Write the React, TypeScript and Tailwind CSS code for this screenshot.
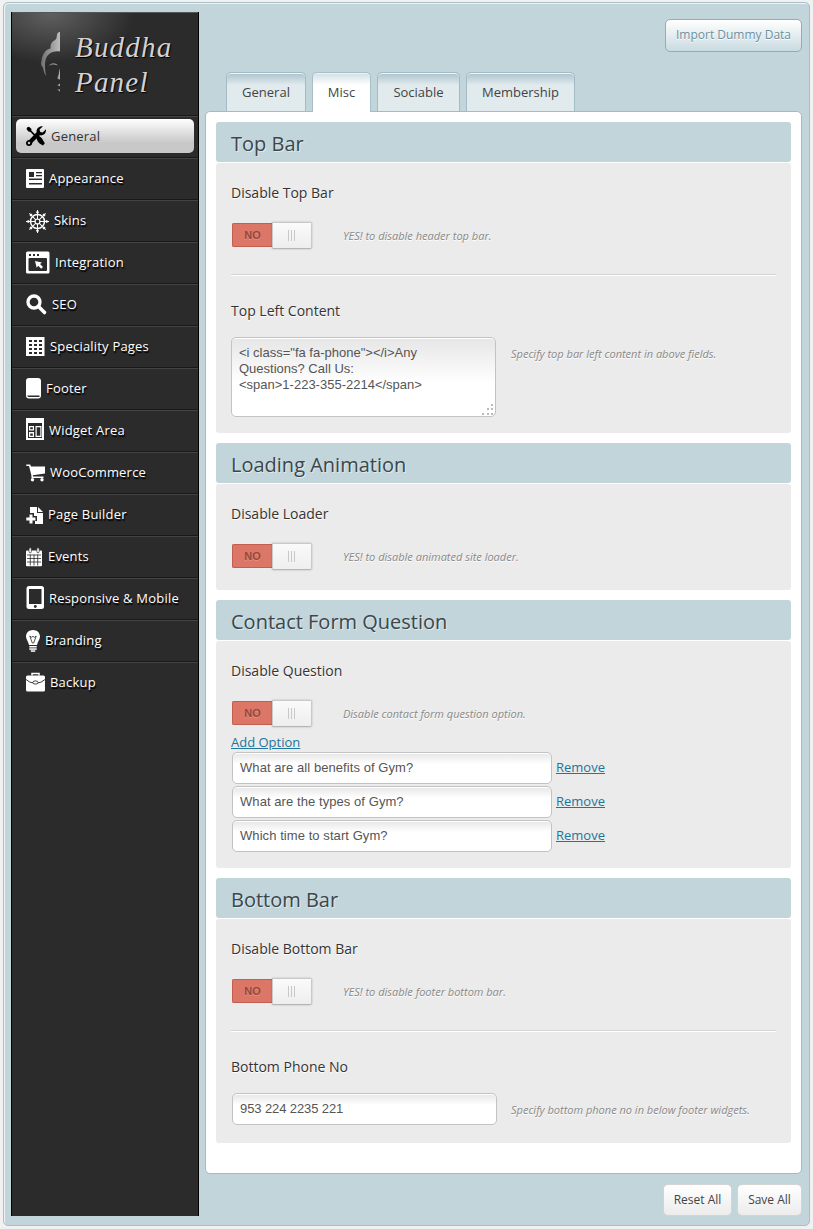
import React from "react";

type IconProps = { w: number; children: React.ReactNode };

const Glyph = ({ w, children }: IconProps) => (
  <svg width={w} height={42} viewBox={`0 0 ${w} 42`} className="block shrink-0" fill="#fff">
    {children}
  </svg>
);

const D = "#2b2b2b";

const spokes = [0, 45, 90, 135, 180, 225, 270, 315];

const navItems: { label: string; icon: React.ReactNode }[] = [
  {
    label: "Appearance",
    icon: (
      <Glyph w={23}>
        <rect x="0" y="11" width="18" height="19" rx="1" />
        <g fill={D}>
          <rect x="3" y="14" width="5" height="5" />
          <rect x="10" y="14" width="6" height="1.3" />
          <rect x="10" y="17" width="6" height="1.3" />
          <rect x="3" y="20.5" width="13" height="1.5" />
          <rect x="3" y="25" width="13" height="1.5" />
        </g>
      </Glyph>
    ),
  },
  {
    label: "Skins",
    icon: (
      <Glyph w={28}>
        <g stroke="#fff" fill="none" transform="translate(11.5 21.5)">
          <circle r="7" strokeWidth="1.5" />
          <circle r="2.5" strokeWidth="1.2" />
          {spokes.map((a) => (
            <g key={a} transform={`rotate(${a})`}>
              <line x1="2" x2="11.5" y1="0" y2="0" strokeWidth="1" />
              <line x1="9.2" x2="9.2" y1="-1.3" y2="1.3" strokeWidth="1.6" />
            </g>
          ))}
        </g>
      </Glyph>
    ),
  },
  {
    label: "Integration",
    icon: (
      <Glyph w={29}>
        <rect x="0" y="9.5" width="23.5" height="22" rx="1.5" />
        <g fill={D}>
          <rect x="2.5" y="16" width="18.5" height="13" rx="1" />
          <rect x="3" y="12" width="2" height="2" />
          <rect x="7" y="12" width="2" height="2" />
          <rect x="11" y="12" width="2" height="2" />
        </g>
        <path d="M9 19l7 1.5-2 1.5 3 3-1.8 1.8-3-3-1.5 2z" />
      </Glyph>
    ),
  },
  {
    label: "SEO",
    icon: (
      <Glyph w={26}>
        <circle cx="8" cy="18" r="6" fill="none" stroke="#fff" strokeWidth="3.3" />
        <path d="M12.5 22.5L18.5 28.5" stroke="#fff" strokeWidth="3.6" strokeLinecap="round" />
      </Glyph>
    ),
  },
  {
    label: "Speciality Pages",
    icon: (
      <Glyph w={24}>
        <rect x="0" y="11" width="18.5" height="19" />
        {[14, 18, 22, 26].map((y) =>
          [3, 8, 13].map((x) => <rect key={`${x}-${y}`} x={x} y={y} width="3" height="2" fill={D} />),
        )}
      </Glyph>
    ),
  },
  {
    label: "Footer",
    icon: (
      <Glyph w={20}>
        <rect x="0" y="10" width="15" height="20.5" rx="3" />
        <path d="M1.2 27.5H13.5V29H3Q1.6 29 1.2 27.5z" fill={D} />
      </Glyph>
    ),
  },
  {
    label: "Widget Area",
    icon: (
      <Glyph w={23}>
        <rect x="0" y="8" width="18" height="22" />
        <g fill={D}>
          <rect x="2" y="10" width="14" height="3" opacity="0" />
          <path d="M2 13h14v15H2z" />
        </g>
        <path d="M3 16h5v4.500H3zM3 22h5v5H3zM9.500 16h6v11h-6z" />
        <path d="M4.200 17.200h2.600v2H4.200zM4.200 23.500h2.600v2.200H4.200zM10.700 17.200h3.600v8.600h-3.600z" fill={D} />
      </Glyph>
    ),
  },
  {
    label: "WooCommerce",
    icon: (
      <Glyph w={24}>
        <path d="M0.300 12.500H4.200L5 14.500H19V21.500L6.800 23.300 7 24.500H17.500V26H5.500L5.300 23 3 14H0.300z" />
        <circle cx="6.500" cy="27.700" r="1.700" />
        <circle cx="16" cy="27.700" r="1.700" />
      </Glyph>
    ),
  },
  {
    label: "Page Builder",
    icon: (
      <Glyph w={22}>
        <path d="M4 13h7v6h6v11H9v-3h2v-5H8v-3H4z" />
        <path d="M12 13l5 5h-5z" />
        <path d="M3.5 20.5h3v3h3v3h-3v3h-3v-3H0.3v-3h3.2z" />
      </Glyph>
    ),
  },
  {
    label: "Events",
    icon: (
      <Glyph w={22}>
        <rect x="0" y="14.5" width="16" height="15.8" rx="1" />
        <g fill="#fff" stroke={D} strokeWidth="0.7">
          <rect x="3" y="11.8" width="2.4" height="5" rx="1.2" />
          <rect x="10.8" y="11.8" width="2.4" height="5" rx="1.2" />
        </g>
        <path d="M1 19h14M1 22.5h14M1 26h14M4.3 18.5V29.5M8 18.5V29.5M11.7 18.5V29.5" stroke={D} strokeWidth="0.8" />
      </Glyph>
    ),
  },
  {
    label: "Responsive & Mobile",
    icon: (
      <Glyph w={23}>
        <rect x="0.5" y="8" width="17.5" height="23" rx="2.5" />
        <rect x="3" y="11" width="12.5" height="15" fill={D} />
        <circle cx="9.3" cy="28.5" r="1.4" fill={D} />
      </Glyph>
    ),
  },
  {
    label: "Branding",
    icon: (
      <Glyph w={19}>
        <path d="M7 10c4 0 7 2.8 7 6.5 0 3-2.3 4.8-3 8.5H3C2.3 21.3 0 19.5 0 16.5 0 12.8 3 10 7 10z" />
        <path d="M3.8 16l2.5 7h1.4l2.5-7-1.7 1.3L7 16.3l-1.5 1z" fill="none" stroke={D} strokeWidth="0.8" />
        <rect x="3.3" y="26" width="7.4" height="1.5" />
        <rect x="3.3" y="28.3" width="7.4" height="1.5" />
        <rect x="4.8" y="30.3" width="4.4" height="1.5" />
      </Glyph>
    ),
  },
  {
    label: "Backup",
    icon: (
      <Glyph w={24}>
        <path d="M6 13.5V11.5h7v2" fill="none" stroke="#fff" strokeWidth="1.5" />
        <rect x="0" y="13.5" width="19" height="16" rx="1.5" />
        <path d="M0 17.5Q4 21 7.5 21M11.5 21Q15 21 19 17.5" fill="none" stroke={D} strokeWidth="0.9" />
        <ellipse cx="9.5" cy="20.5" rx="2.6" ry="1.6" fill="#fff" stroke={D} strokeWidth="0.9" />
      </Glyph>
    ),
  },
];

const ToolsIcon = () => (
  <svg width="20" height="20" viewBox="0 0 20 20" className="mr-[5px] block shrink-0">
    <path d="M1 1.500L3 0.800 5.500 3 5.300 4.600 10 9.200 8.800 10.400 4.200 5.800 2.700 5.800 0.600 3.200z" />
    <path d="M10.300 11.500L12.500 9.500Q16 11.500 17.500 15L18.800 17.300 17 19.500 14.800 18.300Q11.500 16.500 10.300 11.500z" />
    <path
      fillRule="evenodd"
      d="M17 0.300L13.500 3.600 14.300 6 16.700 6.600 19.900 3.300C20.500 7 17.500 10 13.800 9.300L6.300 16.800C6.300 19 4.500 20 3 20 1.200 20 0 18.700 0 17 0 15.300 1.200 13.900 3.200 13.900L10.600 6.300C10 2.800 13.300-0.300 17 0.300zM3 15.800A1.200 1.200 0 1 0 3 18.200 1.200 1.200 0 1 0 3 15.800z"
    />
  </svg>
);

const BuddhaMark = () => (
  <svg width="24" height="64" viewBox="39 30 24 64" className="block shrink-0">
    <defs>
      <linearGradient id="silver" x1="0" x2="1" y1="0" y2="0">
        <stop offset="0" stopColor="#6f6f6f" />
        <stop offset="1" stopColor="#bdbdbd" />
      </linearGradient>
    </defs>
    <g fill="url(#silver)">
      <path d="M60 32V51.500C53 50.500 47 54 45.500 60C44.500 65 45 70 46 76C44 73 43.500 70 43 67.500C41 66 40.500 63 41.500 61C42 55 45 49.500 50.500 48.500C50 45 51.500 41.500 55 40C57 39 56.500 37 57 34.500C57.500 32.500 59 32 60 32z" />
      <path d="M48.500 66C51 62.500 55 62.500 58 65.500C54.500 64 52 64 48.500 66z" />
      <path d="M60 68V79.500C58 79.500 56.500 78.500 57.500 77C59 75 59 71 60 68z" />
      <path d="M57 85.500L60 83.500V86z" />
      <path d="M57 89.500H60V91.500z" />
    </g>
  </svg>
);

const Toggle = () => (
  <div className="flex h-[28px] w-[82px] items-center pl-px">
    <div className="flex h-[24px] w-[40px] items-center justify-center rounded-l-[2px] border border-r-0 border-[#c25f50] bg-[#dc7768] font-['Liberation_Sans'] text-[11px] font-bold text-[#95483c] [text-shadow:0_1px_0_#e49184]">
      NO
    </div>
    <div className="flex h-[27px] w-[40px] items-center justify-center gap-[2px] rounded-r-[2px] border border-[#c9c9c9] border-b-[#b5b5b5] bg-linear-to-b from-[#fafafa] to-[#eeeeee] pr-px shadow-[0_0_2px_rgba(0,0,0,0.25)]">
      <i className="h-[11px] w-px bg-[#c8c8c8]" />
      <i className="h-[11px] w-px bg-[#c8c8c8]" />
      <i className="h-[11px] w-px bg-[#c8c8c8]" />
    </div>
  </div>
);

const Help = ({ children }: { children: React.ReactNode }) => (
  <p className="text-[11px] leading-[16px] italic text-[#888] [text-shadow:0_1px_0_#fff]">{children}</p>
);

const Label = ({ children }: { children: React.ReactNode }) => (
  <h3 className="h-[20px] text-[14px] leading-[20px] text-[#333] [text-shadow:0_1px_0_#fff]">{children}</h3>
);

const ToggleRow = ({ label, help }: { label: string; help: string }) => (
  <>
    <Label>{label}</Label>
    <div className="mt-[18px] flex h-[28px] gap-[30px]">
      <Toggle />
      <div className="pt-[7px]">
        <Help>{help}</Help>
      </div>
    </div>
  </>
);

const Divider = () => <hr className="mt-[25px] mb-[25px] h-[2px] border-0 border-t border-t-[#d3d3d3] bg-white" />;

const Section = ({ title, className, children }: { title: string; className: string; children: React.ReactNode }) => (
  <section className="mb-[10px]">
    <h2 className="h-[40px] rounded-[3px] bg-[#c2d5db] pl-[15px] text-[20px] leading-[43px] text-[#3b474c] [text-shadow:1px_1px_0_#dfeaed]">
      {title}
    </h2>
    <div className={`mt-px rounded-[3px] bg-[#ebebeb] px-[15px] pt-[20px] ${className}`}>{children}</div>
  </section>
);

const field =
  "rounded-[5px] border border-[#c3c3c3] bg-linear-to-b from-[#e6e6e6] to-white px-[7px] font-['Liberation_Sans'] text-[13px] leading-[16px] text-[#555] shadow-[inset_0_1px_0_#fff]";

const TextBox = ({ value, width }: { value: string; width: string }) => (
  <div className={`h-[32px] to-[11px] pt-[7px] ${field} ${width}`}>{value}</div>
);

const questions = ["What are all benefits of Gym?", "What are the types of Gym?", "Which time to start Gym?"];

const tabs = [
  { label: "General", cls: "w-[80px]", active: false },
  { label: "Misc", cls: "w-[59px]", active: true },
  { label: "Sociable", cls: "w-[83px]", active: false },
  { label: "Membership", cls: "w-[109px]", active: false },
];

const Sidebar = () => (
  <aside className="h-[1204px] w-[188px] shrink-0 border-x border-black bg-[#2b2b2b]">
    <header className="flex h-[104px] border-t border-b border-t-[#555] border-b-[#191919] bg-[radial-gradient(ellipse_85px_50px_at_38px_0,#606060,#2b2b2b)] pt-[17px] pl-[27px]">
      <BuddhaMark />
      <div className="ml-[12px] w-[100px] font-['Liberation_Serif'] text-[29px] leading-[35px] tracking-[1.2px] italic text-[#d2d2d2] [text-shadow:1px_1px_1px_#000]">
        <div>Buddha</div>
        <div>Panel</div>
      </div>
    </header>
    <nav className="text-[13px] leading-[18px] tracking-[0.2px] text-white [text-shadow:1px_2px_1px_#000]">
      <a className="block h-[42px] border-t border-b border-t-[#434343] border-b-[#191919] px-[4px] pt-[2px] text-[#333] [text-shadow:none]">
        <span className="flex h-[34px] items-center rounded-[5px] bg-linear-to-b from-white to-[#c8c8c8] to-[70%] pl-[10px]">
          <ToolsIcon />
          General
        </span>
      </a>
      {navItems.map((item) => (
        <a
          key={item.label}
          className="flex h-[42px] items-center border-t border-b border-t-[#434343] border-b-[#191919] pl-[14px] last:border-b-transparent"
        >
          {item.icon}
          <span className="pb-[2px] whitespace-nowrap">{item.label}</span>
        </a>
      ))}
    </nav>
  </aside>
);

export default function App() {
  return (
    <div className="h-[1229px] w-[813px] bg-[#f1f1f1] pt-[2px] pl-[3px] font-['Open_Sans',sans-serif]">
      <div className="flex h-[1224px] w-[807px] rounded-[5px] border border-[#a9bfc7] bg-[#c2d5db] pt-[9px] pl-[7px] shadow-[inset_1px_1px_0_#eef4f6]">
        <Sidebar />
        <main className="ml-[6px] w-[597px]">
          <div className="flex justify-end pt-[7px]">
            <button className="h-[33px] w-[137px] rounded-[5px] border border-[#93acb5] bg-linear-to-b from-white to-[#c9dbe1] pb-px text-[12px] leading-[28px] whitespace-nowrap text-[#6d8f9b] [text-shadow:0_1px_0_#fff]">
              Import Dummy Data
            </button>
          </div>
          <div className="mt-[20px] flex gap-[6px] pl-[21px]">
            {tabs.map((t) => (
              <div
                key={t.label}
                className={`rounded-t-[5px] border border-b-0 text-center text-[13px] leading-[39px] text-[#444] shadow-[inset_0_1px_0_#eef4f6] ${t.cls} ${
                  t.active
                    ? "relative -mb-px h-[40px] border-[#a9bfc7] bg-linear-to-b from-[#cfdfe4] to-white to-[12px]"
                    : "h-[39px] border-[#a3bbc4] bg-linear-to-b from-[#abc3cc] to-[#e1eaed] to-[12px]"
                }`}
              >
                {t.label}
              </div>
            ))}
          </div>
          <div className="h-[1063px] rounded-[5px] border border-[#a3bbc4] bg-white p-[10px]">
            <Section title="Top Bar" className="h-[270px]">
              <ToggleRow label="Disable Top Bar" help="YES! to disable header top bar." />
              <Divider />
              <Label>Top Left Content</Label>
              <div className="mt-[16px] flex gap-[15px]">
                <div className={`relative h-[80px] w-[265px] to-[45px] pt-[7px] ${field}`}>
                  &lt;i class="fa fa-phone"&gt;&lt;/i&gt;Any
                  <br />
                  Questions? Call Us:
                  <br />
                  &lt;span&gt;1-223-355-2214&lt;/span&gt;
                  <svg width="12" height="12" className="absolute right-px bottom-px" fill="#bbb">
                    <path d="M0 10h2v2h-2zM5 10h2v2h-2zM9 10h2v2h-2zM5 5h2v2h-2zM9 5h2v2h-2zM9 1h2v2h-2z" />
                  </svg>
                </div>
                <div className="pt-[9px]">
                  <Help>Specify top bar left content in above fields.</Help>
                </div>
              </div>
            </Section>
            <Section title="Loading Animation" className="h-[106px]">
              <ToggleRow label="Disable Loader" help="YES! to disable animated site loader." />
            </Section>
            <Section title="Contact Form Question" className="h-[227px]">
              <ToggleRow label="Disable Question" help="Disable contact form question option." />
              <a className="mt-[6px] block text-[13px] leading-[19px] text-[#21759b] underline">Add Option</a>
              <div className="flex flex-col gap-[2px] pl-px">
                {questions.map((q) => (
                  <div key={q} className="flex gap-[4px]">
                    <TextBox value={q} width="w-[320px] tracking-[0.07px]" />
                    <a className="text-[13px] leading-[31px] text-[#21759b] underline">Remove</a>
                  </div>
                ))}
              </div>
            </Section>
            <Section title="Bottom Bar" className="h-[224px]">
              <ToggleRow label="Disable Bottom Bar" help="YES! to disable footer bottom bar." />
              <Divider />
              <Label>Bottom Phone No</Label>
              <div className="mt-[16px] flex gap-[14px] pl-px">
                <TextBox value="953 224 2235 221" width="w-[265px] tracking-[-0.1px]" />
                <div className="pt-[9px]">
                  <Help>Specify bottom phone no in below footer widgets.</Help>
                </div>
              </div>
            </Section>
          </div>
          <div className="mt-[10px] flex justify-end gap-[5px] text-[12px] text-[#444]">
            <button className="h-[32px] w-[69px] rounded-[5px] border border-[#d4d4d4] bg-linear-to-b from-white to-[#ececec]">
              Reset All
            </button>
            <button className="h-[32px] w-[65px] rounded-[5px] border border-[#d4d4d4] bg-linear-to-b from-white to-[#ececec]">
              Save All
            </button>
          </div>
        </main>
      </div>
    </div>
  );
}
